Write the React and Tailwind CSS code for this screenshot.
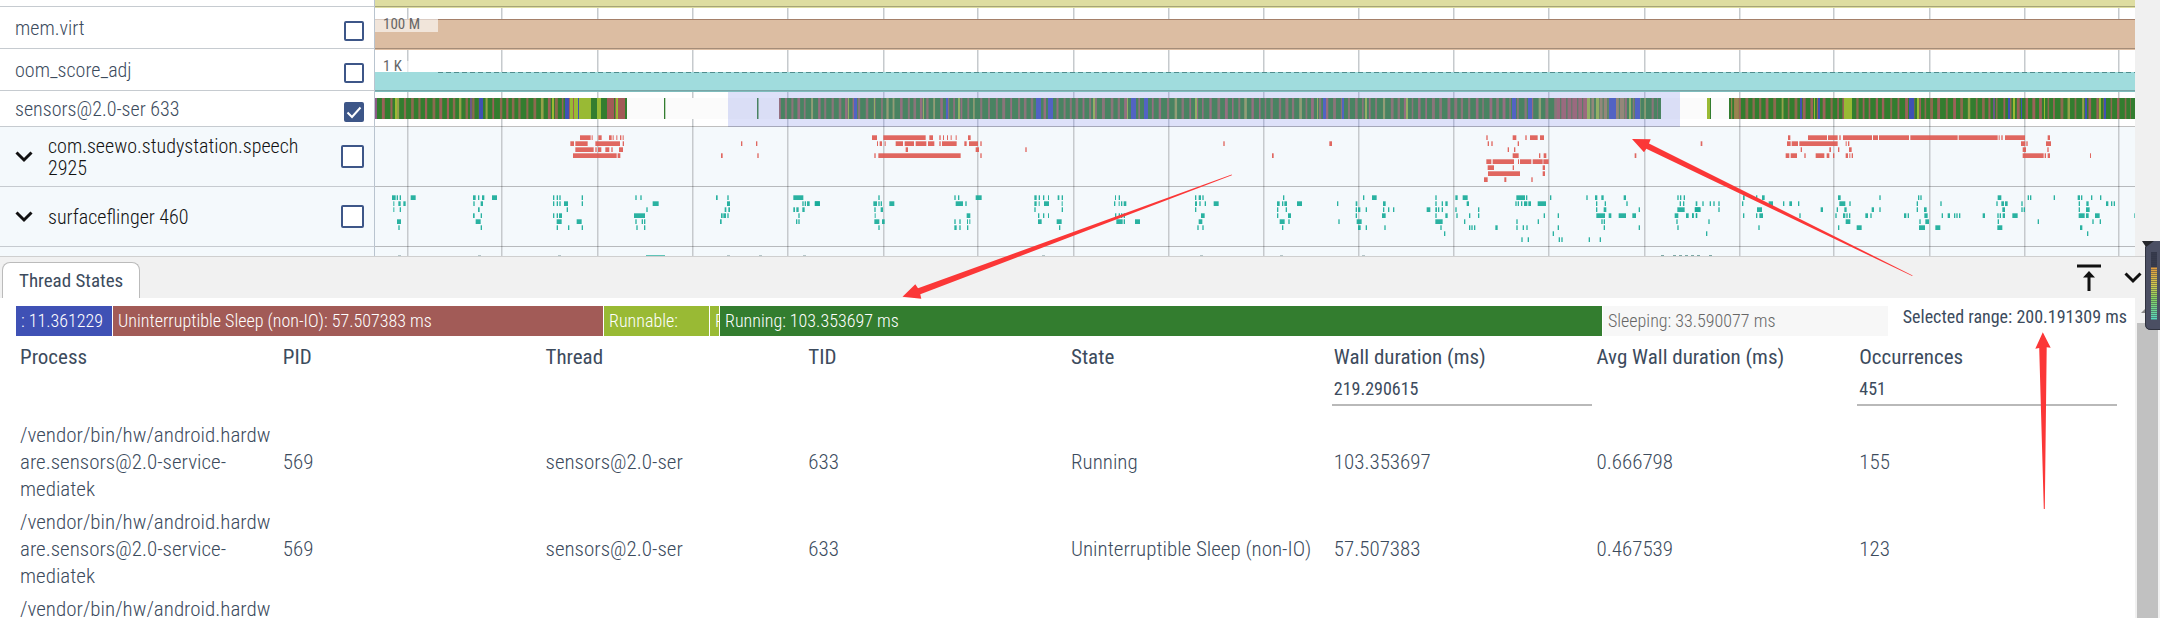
import React from "react";

const CANVAS_W = 1760;
const GRID_X = [33, 127, 223, 318, 413, 509, 603, 699, 794, 889, 984, 1079, 1174, 1270, 1365, 1459, 1555, 1650, 1744];

/* Slices are grouped into time windows. Each entry is [depth, x, width], with x and width in thirds of a pixel. */
const SPEECH = [
  { base: -5, slices: [
    [0, 630, 32], [0, 665, 3], [0, 685, 10], [0, 717, 8], [0, 728, 3], [0, 739, 3], [0, 750, 4], [0, 758, 3],
    [1, 601, 11], [1, 616, 37], [1, 676, 74], [1, 758, 4], [2, 616, 55], [2, 676, 4], [2, 684, 10], [2, 706, 12], [2, 724, 4], [2, 747, 12],
    [3, 609, 131], [3, 743, 8], [1, 1113, 4], [1, 1158, 4], [3, 1053, 5], [3, 1162, 4],
  ] },
  { base: 435, slices: [
    [0, 186, 15], [0, 220, 127], [0, 358, 11], [0, 388, 4], [0, 399, 3], [0, 411, 3], [0, 422, 3], [0, 437, 3], [0, 474, 8],
    [1, 201, 3], [1, 209, 7], [1, 224, 3], [1, 257, 22], [1, 284, 28], [1, 317, 32], [1, 354, 19], [1, 388, 4], [1, 396, 44], [1, 463, 7], [1, 477, 27], [1, 511, 4],
    [2, 287, 7], [2, 497, 10], [2, 646, 4], [3, 193, 4], [3, 205, 247], [3, 511, 4], [1, 1240, 4],
  ] },
  { base: 875, slices: [
    [1, 238, 8], [3, 66, 5], [0, 709, 4], [0, 788, 11], [0, 826, 4], [0, 840, 23], [0, 870, 12],
    [1, 713, 4], [1, 724, 4], [1, 803, 4], [2, 773, 4], [2, 792, 4], [3, 788, 18], [3, 867, 4], [3, 881, 8],
    [4, 709, 15], [4, 728, 64], [4, 804, 3], [4, 810, 34], [4, 848, 30], [4, 880, 16], [5, 713, 19], [5, 788, 4], [5, 878, 7],
    [6, 714, 96], [6, 878, 7], [7, 702, 11], [7, 763, 6], [7, 844, 4], [3, 1154, 5],
  ] },
  { base: 1315, slices: [
    [1, 32, 5], [0, 294, 7], [0, 354, 57], [0, 414, 29], [0, 448, 4], [0, 459, 87], [0, 549, 15], [0, 567, 90], [0, 661, 142], [0, 806, 117], [0, 926, 3], [0, 934, 4], [0, 945, 60], [0, 1073, 7],
    [1, 291, 11], [1, 305, 19], [1, 328, 115], [1, 467, 3], [1, 474, 4], [1, 993, 13], [1, 1009, 4], [1, 1068, 15],
    [2, 332, 4], [2, 418, 5], [2, 444, 4], [2, 477, 8], [2, 998, 10], [2, 1072, 4],
    [3, 287, 11], [3, 302, 19], [3, 343, 4], [3, 377, 26], [3, 410, 8], [3, 429, 4], [3, 467, 7], [3, 478, 3], [3, 485, 4], [3, 998, 63], [3, 1064, 4], [3, 1073, 7], [3, 1200, 3],
  ] },
];

const SURFACE = [
  { base: -5, slices: [
    [0, 66, 11], [0, 80, 4], [0, 89, 4], [0, 122, 15], [1, 70, 3], [1, 85, 7], [1, 100, 7], [2, 70, 3], [2, 89, 4], [4, 81, 12], [5, 85, 4],
    [0, 309, 8], [0, 324, 4], [0, 336, 7], [0, 366, 15], [1, 310, 4], [1, 332, 7], [2, 324, 5], [3, 309, 5], [3, 332, 4], [4, 317, 15], [5, 332, 4],
    [0, 549, 4], [0, 560, 4], [0, 568, 4], [0, 635, 4], [1, 549, 4], [1, 560, 4], [1, 568, 4], [1, 582, 12], [1, 635, 4], [2, 590, 4],
    [3, 549, 4], [3, 560, 4], [3, 567, 9], [4, 560, 15], [4, 620, 15], [5, 560, 4], [5, 594, 4], [5, 635, 4],
    [0, 796, 4], [0, 811, 4], [1, 848, 18], [2, 829, 4], [3, 792, 33], [4, 796, 4], [4, 815, 4], [4, 822, 4], [5, 799, 4], [5, 822, 4],
    [0, 1038, 5], [0, 1072, 4], [1, 1071, 9], [2, 1064, 5], [2, 1075, 5], [3, 1053, 5], [3, 1060, 8], [3, 1072, 4], [4, 1050, 5],
    [0, 1270, 30], [1, 1297, 4], [1, 1304, 4], [1, 1311, 8], [1, 1335, 15], [2, 1270, 5], [2, 1279, 7], [2, 1297, 7], [3, 1285, 4], [4, 1278, 4], [4, 1285, 4],
  ] },
  { base: 435, slices: [
    [1, 14, 15], [0, 205, 4], [1, 190, 11], [1, 205, 4], [1, 212, 4], [1, 238, 15], [2, 193, 4], [2, 212, 7], [3, 194, 3], [4, 193, 15], [4, 216, 8], [5, 205, 4],
    [0, 433, 4], [0, 444, 4], [0, 497, 18], [1, 437, 22], [1, 466, 4], [3, 470, 11], [4, 433, 4], [4, 448, 4], [4, 471, 3], [4, 478, 3], [5, 433, 7], [5, 448, 4], [5, 471, 4],
    [0, 673, 7], [0, 686, 4], [0, 699, 4], [0, 714, 3], [0, 743, 5], [0, 755, 4], [1, 673, 7], [1, 686, 3], [1, 702, 15], [1, 755, 3], [2, 673, 4], [2, 755, 4], [3, 684, 4], [3, 699, 4], [3, 714, 3], [4, 684, 11], [4, 740, 15], [5, 747, 4],
    [0, 915, 3], [0, 926, 4], [1, 912, 4], [1, 926, 3], [1, 933, 4], [1, 941, 8], [3, 915, 4], [3, 926, 4], [3, 933, 4], [3, 941, 4], [4, 919, 19], [4, 941, 4], [4, 975, 15],
    [0, 1155, 4], [0, 1166, 7], [0, 1177, 4], [1, 1155, 6], [1, 1168, 4], [1, 1184, 4], [1, 1211, 15], [2, 1155, 4], [3, 1173, 11], [4, 1166, 11], [5, 1162, 4], [5, 1177, 4],
  ] },
  { base: 875, slices: [
    [0, 99, 4], [1, 81, 8], [1, 96, 4], [1, 103, 8], [1, 141, 15], [2, 81, 4], [2, 107, 4], [3, 81, 4], [3, 114, 9], [4, 89, 15], [4, 115, 4], [5, 96, 4],
    [1, 261, 4], [4, 265, 4], [0, 339, 4], [0, 366, 14], [1, 317, 5], [1, 399, 8], [2, 317, 4], [2, 324, 7], [2, 347, 4], [2, 399, 4], [2, 414, 4], [2, 429, 4], [3, 317, 4], [3, 396, 11], [4, 320, 15], [5, 324, 8], [5, 347, 4], [5, 403, 4],
    [0, 556, 4], [0, 616, 7], [0, 638, 15], [1, 556, 4], [1, 575, 4], [1, 586, 7], [1, 650, 7], [2, 530, 11], [2, 556, 5], [2, 564, 4], [2, 575, 4], [2, 616, 4], [2, 684, 4], [3, 556, 4], [3, 586, 7], [3, 619, 4], [3, 657, 4], [3, 684, 4], [4, 556, 22], [4, 642, 4], [5, 571, 4], [5, 657, 4], [5, 664, 4], [5, 672, 4], [5, 736, 7], [6, 582, 4],
    [0, 799, 26], [0, 828, 4], [1, 796, 4], [1, 803, 4], [1, 813, 4], [1, 822, 10], [1, 835, 8], [1, 863, 25], [3, 881, 4], [4, 799, 4], [4, 863, 4], [5, 799, 4], [5, 818, 4], [5, 829, 4], [7, 814, 4], [7, 833, 4],
    [0, 900, 4], [3, 923, 4], [5, 923, 4], [6, 908, 4], [7, 926, 4], [7, 934, 4], [0, 1009, 4], [0, 1035, 7], [0, 1054, 7], [0, 1121, 7], [1, 1038, 4], [1, 1064, 4], [1, 1129, 4], [2, 1038, 4], [2, 1061, 8], [2, 1166, 4],
    [3, 1039, 26], [3, 1076, 8], [3, 1106, 22], [3, 1147, 11], [4, 1054, 4], [4, 1061, 4], [5, 1061, 4], [5, 1166, 4], [7, 1016, 4], [7, 1049, 4],
    [0, 1282, 4], [0, 1290, 4], [0, 1301, 4], [1, 1289, 4], [1, 1299, 4], [2, 1282, 22], [2, 1335, 15], [3, 1274, 11], [3, 1308, 8], [3, 1327, 4], [3, 1338, 4], [4, 1279, 4], [5, 1282, 4],
  ] },
  { base: 1315, slices: [
    [1, 17, 5], [1, 37, 4], [1, 59, 4], [1, 70, 4], [1, 85, 4], [2, 14, 18], [2, 85, 4], [3, 6, 5], [3, 17, 4], [4, 55, 4], [6, 48, 4],
    [0, 159, 5], [0, 198, 4], [0, 216, 8], [1, 156, 4], [1, 236, 13], [1, 279, 4], [1, 298, 8], [1, 324, 4], [2, 201, 15], [2, 392, 7], [3, 159, 4], [3, 198, 4], [3, 208, 11], [3, 328, 4], [5, 205, 4],
    [0, 444, 8], [0, 568, 4], [1, 448, 18], [1, 478, 4], [2, 440, 4], [2, 463, 7], [2, 545, 7], [2, 568, 4], [3, 436, 4], [3, 459, 7], [3, 469, 4], [3, 477, 4], [3, 526, 8], [3, 541, 4], [4, 467, 14], [5, 444, 4], [5, 500, 15],
    [0, 684, 4], [0, 691, 4], [1, 680, 4], [1, 751, 4], [2, 680, 4], [2, 702, 8], [3, 642, 7], [3, 653, 4], [3, 703, 10], [3, 755, 4], [3, 773, 7], [3, 792, 4], [3, 799, 4], [3, 807, 4], [3, 878, 7], [4, 688, 4], [4, 706, 11], [5, 687, 18], [5, 736, 15],
    [0, 923, 11], [0, 1013, 4], [0, 1020, 4], [0, 1091, 4], [1, 919, 4], [1, 934, 8], [1, 945, 8], [1, 994, 4], [2, 937, 8], [2, 994, 4], [2, 1001, 4], [3, 922, 4], [3, 929, 4], [3, 938, 7], [3, 967, 16], [4, 923, 4], [4, 1043, 4], [5, 922, 15],
    [0, 1163, 7], [0, 1173, 4], [0, 1203, 4], [0, 1230, 4], [1, 1166, 4], [1, 1189, 7], [1, 1248, 7], [1, 1263, 4], [1, 1271, 4], [2, 1166, 4], [2, 1188, 11], [3, 1166, 18], [3, 1188, 8], [3, 1215, 14], [3, 1333, 2], [4, 1207, 4], [4, 1229, 4], [5, 1170, 7], [6, 1191, 4],
  ] },
];

const RUN = "#337d2f";
const SLEEP = "#a25b57";
const READY = "#99ba34";
const IO = "#3f51b5";

/* Blocked gaps between running stretches, with a repeatable jitter. */
function stretch(from, to, seed, dense) {
  const out = [];
  let s = seed;
  const next = () => {
    s = (Math.imul(s, 1664525) + 1013904223) >>> 0;
    return s / 4294967296;
  };
  let x = from;
  while (x < to) {
    const gap = dense ? 2.5 + next() * 3 : 1.5 + next() * 1.5;
    const pick = next();
    const fill = dense || (pick > 0.88 ? "#97a04a" : pick > 0.35 ? "#8d6a4f" : "#9c6259");
    out.push([x, Math.min(gap, to - x), fill]);
    x += gap + (dense ? 0.7 + next() * 1.3 : 3.5 + next() * 2.5);
  }
  return out;
}

const STATE_RANGES = [[0, 252], [404, 882], [1354, 406]];
const STATE_STRIPES = [
  ...stretch(0, 232, 7),
  ...stretch(404, 1182, 21),
  ...stretch(1182, 1212, 5, SLEEP),
  ...stretch(1212, 1250, 11, "#9a8350"),
  ...stretch(1250, 1286, 9),
  ...stretch(1354, 1364, 3, "#9a8350"),
  ...stretch(1364, 1756, 33),
];
const STATE_MARKS = [
  [0, 2, "#8b5b86"], [20, 2, READY], [104, 4, IO], [95, 2, "#6a5a86"], [177, 2, READY], [190, 4, IO], [195, 8, READY], [198, 1, SLEEP], [203, 1, IO], [204, 12, READY],
  [222, 4, READY], [216, 6, RUN], [227, 5, RUN], [232, 19, SLEEP], [239, 1, RUN], [241, 2, READY], [250, 2, RUN],
  [473, 1, READY], [479, 3, IO], [499, 1, READY], [548, 1, READY], [571, 2, IO], [583, 2, READY], [661, 5, IO], [673, 5, IO], [718, 2, READY],
  [752, 1, READY], [756, 5, IO], [769, 4, IO], [820, 2, READY], [942, 1, READY], [948, 3, IO], [967, 2, IO], [990, 2, READY],
  [1031, 2, READY], [1137, 4, IO], [1153, 4, IO], [1212, 3, READY], [1221, 3, READY], [1234, 7, IO], [1254, 2, READY], [1260, 5, IO],
  [1283, 3, RUN], [1354, 2, RUN], [1425, 2, IO], [1439, 1, READY], [1443, 2, IO], [1469, 8, READY], [1534, 5, IO], [1542, 2, READY],
  [1618, 2, "#6a5a86"], [1633, 2, IO], [1638, 2, READY], [1646, 1, IO], [1669, 1, READY], [1710, 2, IO], [1724, 2, READY], [1729, 2, IO],
];

function Canvas({ height, tint, children }) {
  return (
    <svg
      className="block w-full"
      height={height}
      viewBox={`0 0 ${CANVAS_W} ${height}`}
      preserveAspectRatio="none"
      aria-hidden="true"
    >
      <rect width={CANVAS_W} height={height} fill={tint ? "#f4f9fc" : "#ffffff"} />
      {GRID_X.map((x) => (
        <rect key={x} x={x - 1} width="1.5" height={height} fill="#c6cacd" />
      ))}
      {children}
      <rect y={height - 1} width={CANVAS_W} height="1" fill="#000" fillOpacity="0.25" />
    </svg>
  );
}

function Slices({ groups, color }) {
  return groups.map((g) => (
    <g key={g.base} transform={`translate(${g.base} 8) scale(0.33333 1)`} fill={color} fillOpacity="0.92">
      {g.slices.map(([d, x, w], i) => (
        <rect key={i} x={x} y={d * 6 + 0.3} width={w} height="4.7" />
      ))}
    </g>
  ));
}

function Chevron({ className }) {
  return (
    <svg className={className} viewBox="0 0 18 12" fill="none" stroke="currentColor" strokeWidth="3" aria-hidden="true">
      <path d="M1.5 1.5 L9 9 L16.5 1.5" />
    </svg>
  );
}

function Check({ id, size, checked }) {
  return (
    <span className="relative flex shrink-0">
      <input
        id={id}
        type="checkbox"
        defaultChecked={checked}
        className={`peer appearance-none rounded-xs border-2 border-[#3d5688] bg-white checked:bg-[#3d5688] ${size}`}
      />
      <svg
        className="pointer-events-none absolute inset-0 hidden h-full w-full peer-checked:block"
        viewBox="0 0 20 20"
        fill="none"
        stroke="#fff"
        strokeWidth="2"
        aria-hidden="true"
      >
        <path d="M3.5 10.5 L8 15 L16.5 5.5" />
      </svg>
    </span>
  );
}

function Track({ id, name, height, checked, children }) {
  return (
    <div className={`flex ${height}`}>
      <div className="flex w-[375px] shrink-0 items-center justify-between border-r border-b border-r-[#b9c4cf] border-b-[#c6cbd0] pr-[10px] pl-[15px]">
        <label htmlFor={id} className="text-[20px] leading-[22px] font-light text-[#3c4b5d]">{name}</label>
        <span className="flex pt-[6px]">
          <Check id={id} size="size-5" checked={checked} />
        </span>
      </div>
      <div className="relative min-w-0 flex-1">{children}</div>
    </div>
  );
}

function ProcessTrack({ id, name, children }) {
  return (
    <div className="flex h-[60px]">
      <div className="flex w-[375px] shrink-0 items-center border-r border-b border-r-[#b9c4cf] border-b-[#c6cbd0] bg-[#f4f9fc] pr-[10px] pl-[15px]">
        <button type="button" aria-label={`Collapse ${name}`} className="mr-[15px] text-[#121212]">
          <Chevron className="h-3 w-[18px]" />
        </button>
        <label htmlFor={id} className="w-[270px] text-[20px] leading-[22px] font-light text-[#121212]">{name}</label>
        <span className="ml-auto flex">
          <Check id={id} size="size-[23px]" />
        </span>
      </div>
      <div className="min-w-0 flex-1">{children}</div>
    </div>
  );
}

const BARS = [
  { text: ": 11.361229", grow: 96, tone: "bg-[#3f51b5] text-white" },
  { text: "Uninterruptible Sleep (non-IO): 57.507383 ms", grow: 490, tone: "bg-[#a25b57] text-white" },
  { text: "Runnable:", grow: 105, tone: "bg-[#99ba34] text-white" },
  { text: "R", grow: 9, tone: "bg-[#99ba34] text-white" },
  { text: "Running: 103.353697 ms", grow: 882, tone: "bg-[#337d2f] text-white" },
  { text: "Sleeping: 33.590077 ms", grow: 285, tone: "bg-[#f7f7f7] text-[#666]" },
];

const COLUMNS = [
  { title: "Process" },
  { title: "PID" },
  { title: "Thread" },
  { title: "TID" },
  { title: "State" },
  { title: "Wall duration (ms)", sum: "219.290615" },
  { title: "Avg Wall duration (ms)" },
  { title: "Occurrences", sum: "451" },
];

const PROCESS = "/vendor/bin/hw/android.hardware.sensors@2.0-service-mediatek";
const ROWS = [
  [PROCESS, "569", "sensors@2.0-ser", "633", "Running", "103.353697", "0.666798", "155"],
  [PROCESS, "569", "sensors@2.0-ser", "633", "Uninterruptible Sleep (non-IO)", "57.507383", "0.467539", "123"],
  [PROCESS, "", "", "", "", "", "", ""],
];

function LevelMeter() {
  return (
    <svg className="absolute top-[241px] right-0 h-[90px] w-[18px]" viewBox="0 0 18 90" aria-hidden="true">
      <defs>
        <linearGradient id="level" x1="0" y1="0" x2="0" y2="1">
          <stop offset="0" stopColor="#e29a3c" />
          <stop offset="0.35" stopColor="#d3cc4c" />
          <stop offset="0.6" stopColor="#86d45f" />
          <stop offset="1" stopColor="#56d8c2" />
        </linearGradient>
      </defs>
      <path d="M6 0 H18 V89 H9 Q3 89 3 83 V6 Z" fill="#4b4f63" />
      <path d="M3.5 6 V83 Q3.5 88.5 9 88.5 H18" fill="none" stroke="#30333f" />
      <path d="M0 0 H12 L4 6 Z" fill="#25262b" />
      <rect x="9" y="11" width="6" height="15" fill="#34384a" />
      <rect x="9" y="26" width="6" height="53" fill="url(#level)" />
      {Array.from({ length: 34 }, (_, i) => (
        <rect key={i} x="9" y={12 + i * 2} width="6" height="0.5" fill="#3a3f4f" />
      ))}
    </svg>
  );
}

export default function App() {
  return (
    <div className="relative flex h-screen flex-col overflow-hidden bg-white font-['Roboto_Condensed','Roboto',sans-serif]">
      <section className="flex h-[256px] shrink-0 overflow-hidden">
        <div className="min-w-0 flex-1">
          <div className="flex h-[7px]">
            <div className="w-[375px] shrink-0 border-r border-b border-r-[#b9c4cf] border-b-[#c6cbd0]" />
            <div className="min-w-0 flex-1">
              <Canvas height={7}>
                <rect width={CANVAS_W} height="7" fill="#dedda1" />
              </Canvas>
            </div>
          </div>
          <Track id="t-virt" name="mem.virt" height="h-[42px]">
            <Canvas height={42}>
              <rect y="0" width={CANVAS_W} height="1" fill="#dedda1" />
              <rect y="12" width={CANVAS_W} height="30" fill="#dcbda2" />
              <rect y="12" width={CANVAS_W} height="1" fill="#a5806a" />
            </Canvas>
            <span className="absolute top-[12px] left-0 h-[13px] w-[63px] bg-white/60 pl-[8px] text-[15px] leading-[11px] text-[#666]">100 M</span>
          </Track>
          <Track id="t-oom" name="oom_score_adj" height="h-[42px]">
            <Canvas height={42}>
              <rect y="0" width={CANVAS_W} height="1" fill="#dcbda2" />
              <rect y="23" width={CANVAS_W} height="19" fill="#a0dcdd" />
              <path d={`M63 23.5 H${CANVAS_W}`} stroke="#4f8d8e" strokeDasharray="5 3" />
            </Canvas>
            <span className="absolute top-[12px] left-0 h-[11px] w-[63px] bg-white/60 pl-[8px] text-[15px] leading-[11px] text-[#666]">1 K</span>
          </Track>
          <Track id="t-sensors" name="sensors@2.0-ser 633" height="h-[36px]" checked>
            <Canvas height={36}>
              <rect width={CANVAS_W} height="1" fill="#7fbcbd" />
              <rect y="7" width={CANVAS_W} height="21" fill="#fbfbfb" />
              {STATE_RANGES.map(([x, w]) => (
                <rect key={x} x={x} y="7" width={w} height="21" fill={RUN} />
              ))}
              {STATE_STRIPES.map(([x, w, c], i) => (
                <rect key={i} x={x} y="7" width={w} height="21" fill={c} />
              ))}
              {STATE_MARKS.map(([x, w, c], i) => (
                <rect key={i} x={x} y="7" width={w} height="21" fill={c} />
              ))}
              <rect x="289" y="7" width="1.3" height="21" fill={RUN} />
              <rect x="382" y="7" width="1.5" height="21" fill={RUN} />
              <rect x="1332" y="7" width="4" height="21" fill={READY} />
              <rect x="1335" y="7" width="1" height="21" fill={RUN} />
              <rect x="353" y="1" width="952" height="35" fill="rgb(132,146,235)" fillOpacity="0.28" />
            </Canvas>
          </Track>
          <ProcessTrack id="t-speech" name="com.seewo.studystation.speech 2925">
            <Canvas height={60} tint>
              <Slices groups={SPEECH} color="#dd5a52" />
            </Canvas>
          </ProcessTrack>
          <ProcessTrack id="t-surface" name="surfaceflinger 460">
            <Canvas height={60} tint>
              <Slices groups={SURFACE} color="#18ab99" />
            </Canvas>
          </ProcessTrack>
          <div className="flex h-[9px]">
            <div className="w-[375px] shrink-0 border-r border-r-[#b9c4cf] bg-[#f4f9fc]" />
            <div className="min-w-0 flex-1">
              <svg className="block w-full" height="9" viewBox={`0 0 ${CANVAS_W} 9`} preserveAspectRatio="none" aria-hidden="true">
                <rect width={CANVAS_W} height="9" fill="#f4f9fc" />
                {GRID_X.map((x) => (
                  <rect key={x} x={x - 1} width="1.5" height="9" fill="#c6cacd" />
                ))}
                <rect x="271" y="8" width="19" height="1" fill="#5fc4b8" />
                {[23, 103, 183, 352, 384, 428, 667, 825, 905, 987].map((x) => (
                  <rect key={x} x={x} y="8" width="3" height="1" fill="#b5c6c8" />
                ))}
                {[1286, 1298, 1304, 1310, 1316, 1322, 1334].map((x) => (
                  <rect key={x} x={x} y="8" width="3" height="1" fill="#7fa9a6" />
                ))}
              </svg>
            </div>
          </div>
        </div>
        <div className="w-[25px] shrink-0 bg-[#f0f0f0]" />
      </section>

      <header className="flex h-[42px] shrink-0 items-end border-t border-[#cfcfcf] bg-[#f1f1f1] pl-[2px]">
        <button
          type="button"
          className="h-[36px] rounded-t-lg border border-b-0 border-[#bbb] bg-white px-4 text-[19px] leading-[35px] text-[#3c4b5d]"
        >
          Thread States
        </button>
        <div className="ml-auto flex h-full items-center gap-[23px] pr-[18px] text-[#111]">
          <button type="button" aria-label="Maximize panel">
            <svg className="h-[28px] w-[24px]" viewBox="0 0 24 28" aria-hidden="true">
              <path d="M0 0.5 H24 V3.5 H0 Z M12 7 L18 13.5 H13.5 V27 H10.5 V13.5 H6 Z" fill="currentColor" />
            </svg>
          </button>
          <button type="button" aria-label="Collapse panel">
            <Chevron className="h-3 w-[18px]" />
          </button>
        </div>
      </header>

      <section className="flex min-h-0 flex-1">
        <div className="min-w-0 flex-1 overflow-hidden">
          <div className="flex pt-2 pr-[8px] pl-4">
            <div className="flex h-[30px] min-w-0 flex-1 gap-px">
              {BARS.map((b, i) => (
                <div
                  key={i}
                  className={`min-w-0 basis-0 overflow-hidden text-[18px] leading-[30px] font-light whitespace-nowrap ${b.tone}`}
                  style={{ flexGrow: b.grow }}
                >
                  <span className="pl-[5px]">{b.text}</span>
                </div>
              ))}
            </div>
            <p className="w-[239px] shrink-0 text-right text-[18px] leading-[22px] whitespace-nowrap text-[#3c4b5d]">
              Selected range: 200.191309 ms
            </p>
          </div>
          <div className="px-[15px]">
            <table className="w-full table-fixed border-separate [border-spacing:3px_2px] text-left text-[#3c4b5d]">
              <thead>
                <tr>
                  {COLUMNS.map((c) => (
                    <th key={c.title} scope="col" className="h-[80px] p-0 pt-[6px] align-top text-[21px] leading-[27px] font-normal">
                      <div className="px-[2px]">{c.title}</div>
                      {c.sum && (
                        <div className="border-b-2 border-[#b9b9b9] px-[2px] pt-[4px] pb-[2px] text-[18px] leading-[27px]">{c.sum}</div>
                      )}
                    </th>
                  ))}
                </tr>
              </thead>
              <tbody>
                {ROWS.map((r, i) => (
                  <tr key={i}>
                    {r.map((v, j) => (
                      <td key={j} className="p-[2px] align-middle text-[21px] leading-[27px] font-light break-words">{v}</td>
                    ))}
                  </tr>
                ))}
              </tbody>
            </table>
          </div>
        </div>
        <div className="flex w-[25px] shrink-0 flex-col bg-[#f1f1f1] pr-[2px] pl-[2px]">
          <div className="flex h-[25px] items-center pl-[4px]">
            <svg className="h-[5px] w-[10px]" viewBox="0 0 10 5" aria-hidden="true">
              <path d="M0 5 L5 0 L10 5 Z" fill="#8a8a8a" />
            </svg>
          </div>
          <div className="flex-1 bg-[#c1c1c1]" />
        </div>
      </section>

      <svg className="pointer-events-none absolute top-0 left-0 h-[618px] w-[2160px]" viewBox="0 0 2160 618" fill="#fb3737" aria-hidden="true">
        <path d="M902.5 296.7 L915.3 284.3 L918 288.3 L1231.7 174.6 L1231.9 175.2 L920.3 294.3 L921.3 298.7 Z" />
        <path d="M1632 139 L1650.7 139.3 L1649 143.5 L1912.6 275.4 L1912.2 276.1 L1646.3 148.8 L1644 152.3 Z" />
        <path d="M2042.8 332.3 L2050.7 347.7 L2046.7 347.3 L2044.8 509 L2043.8 509 L2039.2 348 L2035.3 348.7 Z" />
      </svg>
      <LevelMeter />
    </div>
  );
}
